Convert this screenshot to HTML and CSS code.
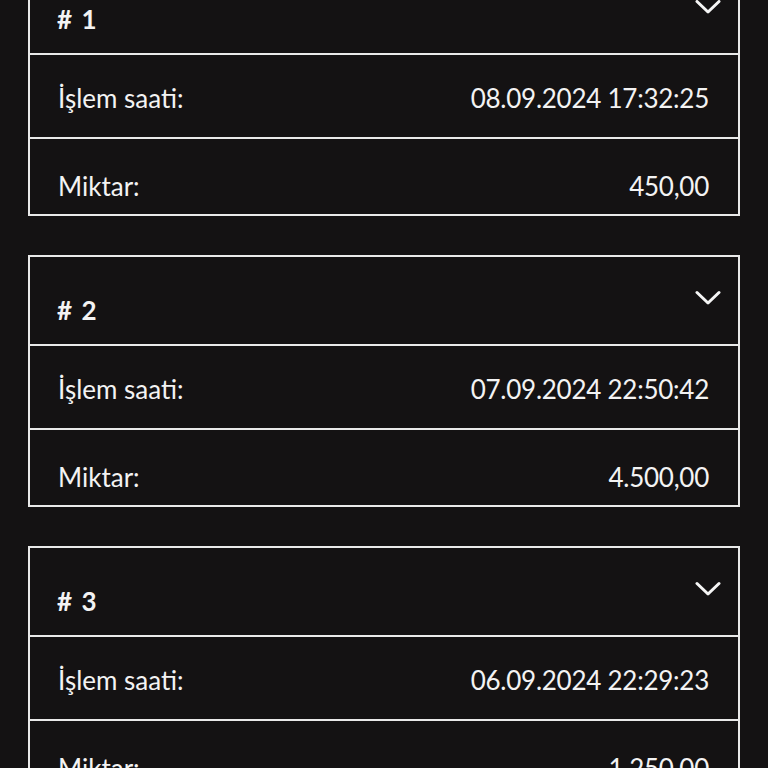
FILE: index.html
```html
<!DOCTYPE html>
<html lang="tr">
<head>
<meta charset="utf-8">
<title>İşlemler</title>
<link rel="stylesheet" href="styles.css">
</head>
<body>
<main class="list">
  <section class="card">
    <header class="card-head">
      <span class="card-title"># 1</span>
      <svg class="chev" viewBox="0 0 26 16" width="26" height="16"><path d="M2 2.5 L13 13 L24 2.5" /></svg>
    </header>
    <div class="row row-time"><span>İşlem saati:</span><span class="value">08.09.2024 17:32:25</span></div>
    <div class="row row-amount"><span>Miktar:</span><span class="value">450,00</span></div>
  </section>
  <section class="card">
    <header class="card-head">
      <span class="card-title"># 2</span>
      <svg class="chev" viewBox="0 0 26 16" width="26" height="16"><path d="M2 2.5 L13 13 L24 2.5" /></svg>
    </header>
    <div class="row row-time"><span>İşlem saati:</span><span class="value">07.09.2024 22:50:42</span></div>
    <div class="row row-amount"><span>Miktar:</span><span class="value">4.500,00</span></div>
  </section>
  <section class="card">
    <header class="card-head">
      <span class="card-title"># 3</span>
      <svg class="chev" viewBox="0 0 26 16" width="26" height="16"><path d="M2 2.5 L13 13 L24 2.5" /></svg>
    </header>
    <div class="row row-time"><span>İşlem saati:</span><span class="value">06.09.2024 22:29:23</span></div>
    <div class="row row-amount"><span>Miktar:</span><span class="value">1.250,00</span></div>
  </section>
</main>
</body>
</html>
```
FILE: styles.css
```css
* { box-sizing: border-box; }
html, body { margin: 0; padding: 0; }
body {
  background: #141213;
  color: #f3f3f3;
  font-family: Lato, "Open Sans", sans-serif;
  overflow: hidden;
}
.list {
  display: flex;
  flex-direction: column;
  gap: 39px;
  padding: 0 28px;
  margin-top: -36px;
}
.card {
  border: 2px solid #e9e9e9;
}
.card-head {
  height: 89px;
  display: flex;
  justify-content: space-between;
  align-items: flex-start;
  padding: 0 17px 0 27px;
  border-bottom: 2px solid #e9e9e9;
}
.card-title {
  margin-top: 38px;
  font-size: 26px;
  font-weight: 700;
  line-height: 30px;
  word-spacing: 3px;
}
.chev {
  margin-top: 33px;
  fill: none;
  stroke: #f5f5f5;
  stroke-width: 3;
  stroke-linecap: round;
  stroke-linejoin: round;
}
.row {
  display: flex;
  justify-content: space-between;
  align-items: flex-start;
  padding: 0 29px 0 28px;
  font-size: 26px;
  line-height: 30px;
}
.value {
  letter-spacing: -0.25px;
}
.row-time {
  height: 84px;
  padding-top: 28px;
  border-bottom: 2px solid #e9e9e9;
}
.row-amount {
  height: 75px;
  padding-top: 32px;
}
```
